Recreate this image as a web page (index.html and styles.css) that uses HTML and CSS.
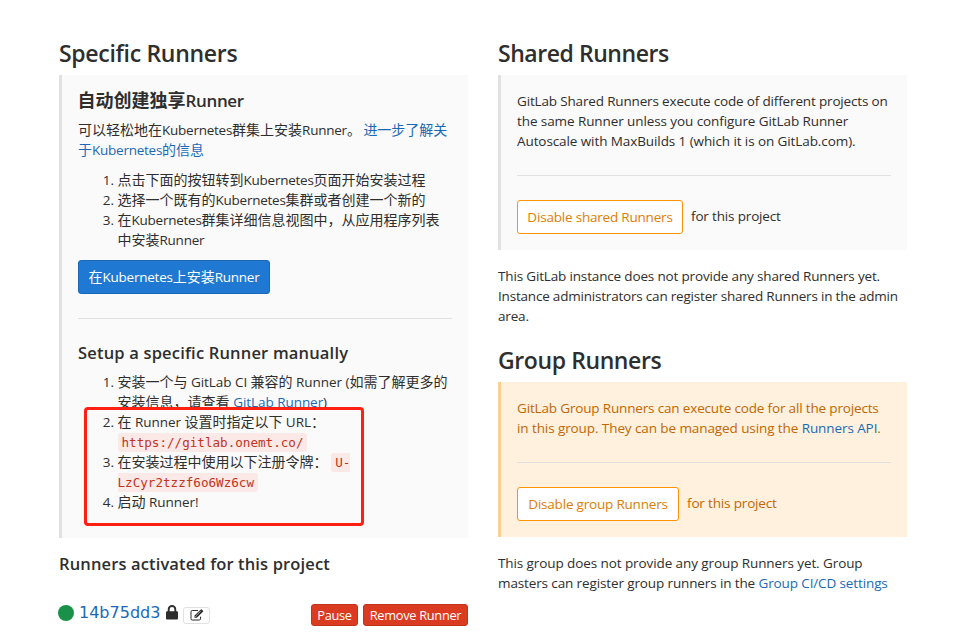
FILE: index.html
```html
<!DOCTYPE html>
<html lang="zh-CN">
<head>
<meta charset="utf-8">
<title>Runners</title>
<link rel="stylesheet" href="styles.css">
</head>
<body>
<main class="page">
  <section class="col">
    <h2>Specific Runners</h2>
    <div class="callout specific">
      <h4 class="auto-title"><b>自动创建独享</b><span class="lt">Runner</span></h4>
      <p class="zh"><span class="line">可以轻松地在<span class="lt">Kubernetes</span>群集上安装<span class="lt">Runner</span>。<a class="more" href="#">进一步了解关</a></span><a class="line" href="#">于<span class="lt">Kubernetes</span>的信息</a></p>
      <ol class="zh steps">
        <li><span class="num">1.</span>点击下面的按钮转到<span class="lt">Kubernetes</span>页面开始安装过程</li>
        <li><span class="num">2.</span>选择一个既有的<span class="lt">Kubernetes</span>集群或者创建一个新的</li>
        <li><span class="num">3.</span><span class="line">在<span class="lt">Kubernetes</span>群集详细信息视图中，从应用程序列表</span><span class="line">中安装<span class="lt">Runner</span></span></li>
      </ol>
      <button class="btn primary">在<span class="lt">Kubernetes</span>上安装<span class="lt">Runner</span></button>
      <hr>
      <h4 class="manual-title">Setup a specific Runner manually</h4>
      <ol class="zh manual">
        <li><span class="num">1.</span><span class="line">安装一个与<span class="lt"> GitLab CI </span>兼容的<span class="lt"> Runner (</span>如需了解更多的</span><span class="line">安装信息，请查看 <a class="lt" href="#">GitLab Runner</a><span class="lt">)</span></span></li>
        <li><span class="num">2.</span><span class="line">在<span class="lt"> Runner </span>设置时指定以下<span class="lt"> URL</span>：</span><span class="line"><code>https://gitlab.onemt.co/</code></span></li>
        <li><span class="num">3.</span><span class="line">在安装过程中使用以下注册令牌： <code class="head">U-</code></span><span class="line"><code class="tail">LzCyr2tzzf6o6Wz6cw</code></span></li>
        <li><span class="num">4.</span>启动<span class="lt"> Runner!</span></li>
      </ol>
      <div class="highlight"></div>
    </div>
    <h4 class="activated">Runners activated for this project</h4>
    <div class="runner">
      <span class="dot"></span>
      <a class="sha" href="#">14b75dd3</a>
      <svg class="lock" width="12" height="15" viewBox="0 0 12 15"><path d="M2.7 7V4.3a3.3 3.3 0 0 1 6.6 0V7" fill="none" stroke="#2e2e2e" stroke-width="1.9"/><rect x="0" y="6.2" width="12" height="8.3" rx="1" fill="#2e2e2e"/></svg>
      <button class="edit" aria-label="Edit"><svg width="14" height="12" viewBox="0 0 14 12"><path d="M8 1.5H2.2Q1 1.5 1 2.7v7.1Q1 11 2.2 11h7.1q1.2 0 1.2-1.2V7.7" fill="none" stroke="#2e2e2e"/><path d="M4.5 8.8V6.5L10.8.5q.5-.5 1 0l1.2 1.2q.5.5 0 1L6.8 8.8Z" fill="#2e2e2e"/><path d="m6 6.7 4.6-4.5M5.3 7.1l.9.9" stroke="#fff" stroke-width=".6"/></svg></button>
      <button class="btn-sm pause">Pause</button>
      <button class="btn-sm remove">Remove Runner</button>
    </div>
  </section>
  <section class="col right">
    <h2 class="shared-title">Shared Runners</h2>
    <div class="callout shared">
      <p class="intro"><span class="line">GitLab Shared Runners execute code of different projects on</span><span class="line loose">the same Runner unless you configure GitLab Runner</span><span class="line loose">Autoscale with MaxBuilds 1 (which it is on GitLab.com).</span></p>
      <hr>
      <div class="action"><button class="btn warn">Disable shared Runners</button><span>for this project</span></div>
    </div>
    <p class="note"><span class="line">This GitLab instance does not provide any shared Runners yet.</span><span class="line tight">Instance administrators can register shared Runners in the admin</span><span class="line">area.</span></p>
    <h2 class="group-title">Group Runners</h2>
    <div class="callout group">
      <p><span class="line">GitLab Group Runners can execute code for all the projects</span><span class="line loose">in this group. They can be managed using the <a href="#">Runners API</a>.</span></p>
      <hr>
      <div class="action"><button class="btn warn narrow">Disable group Runners</button><span>for this project</span></div>
    </div>
    <p class="note"><span class="line loose">This group does not provide any group Runners yet. Group</span><span class="line last">masters can register group runners in the <a href="#">Group CI/CD settings</a></span></p>
  </section>
</main>
</body>
</html>
```
FILE: styles.css
```css
* { box-sizing: border-box; }
body {
  margin: 0;
  background: #fff;
  color: #2e2e2e;
  font: 13.5px/20px "Open Sans", "Noto Sans CJK SC", sans-serif;
  overflow: hidden;
}
.page { display: flex; gap: 30px; padding: 38px 0 0 59px; height: 638px; }
.col { width: 409px; flex: none; }
h2, h4, p, ol { margin: 0; padding: 0; }
h2 { font-size: 23px; line-height: 30px; font-weight: 600; height: 37px; white-space: nowrap; letter-spacing: -.3px; }
h4 { font-size: 16.5px; line-height: 20px; font-weight: 600; white-space: nowrap; }
a { color: #1b69b6; text-decoration: none; }
button { font: inherit; margin: 0; padding: 0; white-space: nowrap; }
hr { border: 0; border-top: 1px solid #e1e1e1; margin: 24px 0; }
.line { display: block; white-space: nowrap; }
.callout { position: relative; border-left: 3px solid #e1e1e1; background: #fafafa; padding: 16px; }
.specific { height: 463px; }
.auto-title { height: 29px; font-size: 18px; margin: -1px 0 1px -.5px; }
.auto-title b { font-weight: 700; }
.auto-title .lt { font-size: 17px; letter-spacing: -.35px; }
.zh { font-size: 14px; list-style: none; }
.zh .lt, .primary .lt { font-size: 13.5px; white-space: pre; letter-spacing: -.25px; }
.zh li { position: relative; padding-left: 39.5px; white-space: nowrap; }
.manual .lt { letter-spacing: -.05px; }
.num { position: absolute; left: 0; width: 36px; text-align: right; font-size: 13.5px; }
.more { margin-left: 2.5px; }
.steps { margin-top: 10px; }
.btn { display: block; height: 34px; border: 1px solid; border-radius: 3px; text-align: center; }
.primary { width: 192px; margin-top: 10px; background: #1f78d1; border-color: #1b69b6; color: #fff; font-size: 14px; }
.manual-title { height: 29px; letter-spacing: .18px; }
code { font: 12.6px/15px "DejaVu Sans Mono", monospace; color: #c0341d; background: #fbe9e7; padding: 2px 4px; border-radius: 3px; }
.head { margin-left: 0; padding-right: 0; border-radius: 3px 0 0 3px; }
.tail { padding-left: 0; border-radius: 0 3px 3px 0; }
.highlight { position: absolute; left: 22px; top: 332px; width: 280px; height: 119px; border: 3px solid #ff2013; border-radius: 4px; }
.activated { margin-top: 16px; letter-spacing: .13px; }
.runner { display: flex; align-items: center; margin-top: 30px; height: 22px; }
.dot { width: 16px; height: 16px; margin: 0 0 5px -1px; border-radius: 50%; background: #1a9149; }
.sha { margin: -5px 0 0 5px; width: 82px; font: 16px/20px "DejaVu Sans", sans-serif; }
.lock { margin: -5px 0 0 5px; }
.edit { display: flex; align-items: center; justify-content: center; width: 27px; height: 17px; margin-left: 5px; background: #fff; border: 1px solid #e1e1e1; border-radius: 3px; }
.btn-sm { height: 22px; border: 1px solid #c0341d; border-radius: 3px; background: #db3b21; color: #fff; font-size: 12.8px; line-height: 20px; letter-spacing: -.3px; }
.pause { width: 47px; margin-left: auto; }
.remove { width: 105px; margin-left: 5px; }
.right .line, .action { letter-spacing: -.16px; }
.right .tight { letter-spacing: -.2px; }
.right .loose { letter-spacing: -.09px; }
.right .last { letter-spacing: -.12px; }
.right .shared-title { letter-spacing: -.45px; }
.shared { height: 175px; }
.action { display: flex; gap: 8px; white-space: nowrap; line-height: 32px; }
.warn { width: 166px; background: #fff; border-color: #fc9403; color: #de7e00; letter-spacing: -.2px; }
.narrow { width: 162px; }
.note { margin-top: 16px; }
.right .group-title { margin-top: 19px; letter-spacing: -.4px; }
.group { height: 155px; border-color: #ffcf91; background: #fff1de; color: #c26700; }
```
